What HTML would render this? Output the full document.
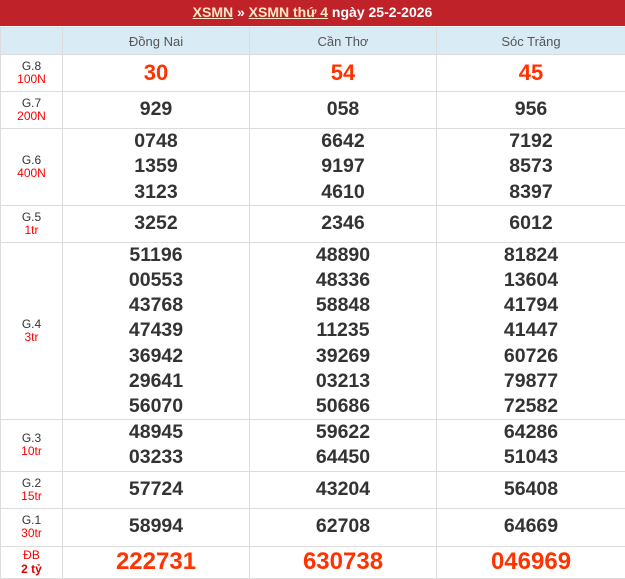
<!DOCTYPE html>
<html><head><meta charset="utf-8"><style>
*{margin:0;padding:0;box-sizing:border-box}
body{width:625px;height:579px;background:#fff;font-family:"Liberation Sans",Arial,sans-serif;position:relative;overflow:hidden}
.top{position:absolute;left:0;top:0;width:625px;height:26px;background:#bf2329;color:#fff;font-weight:bold;font-size:14px;text-align:center;line-height:25px}
.top a{color:#ffe9c6;text-decoration:underline}
table{position:absolute;left:0;top:27px;width:625px;border-collapse:collapse;table-layout:fixed}
td{border:1px solid #dcdcdc;text-align:center;vertical-align:middle;padding:0}
th{border:1px solid #dcdcdc;background:#d9ebf5;color:#555;font-weight:normal;font-size:13px;height:27px}
.l{font-size:12px;color:#333;line-height:13px}
.l span{color:#f00;display:block}
.n{font-size:19.5px;font-weight:bold;color:#333;line-height:25.3px}
.r{color:#ff3300;font-size:22px}
.d{color:#ff3300;font-size:24px}
.db{color:#f00;font-size:12px;line-height:14px}
.db b{color:#d00;display:block}
</style></head><body>
<div class="top"><a>XSMN</a> » <a>XSMN thứ 4</a> ngày 25-2-2026</div>
<table>
<colgroup><col style="width:62px"><col style="width:187px"><col style="width:187px"><col style="width:189px"></colgroup>
<tr><th></th><th>Đồng Nai</th><th>Cần Thơ</th><th>Sóc Trăng</th></tr>
<tr style="height:37px"><td class="l">G.8<span>100N</span></td><td class="n r">30</td><td class="n r">54</td><td class="n r">45</td></tr>
<tr style="height:37px"><td class="l">G.7<span>200N</span></td><td class="n">929</td><td class="n">058</td><td class="n">956</td></tr>
<tr style="height:77px"><td class="l">G.6<span>400N</span></td><td class="n">0748<br>1359<br>3123</td><td class="n">6642<br>9197<br>4610</td><td class="n">7192<br>8573<br>8397</td></tr>
<tr style="height:37px"><td class="l">G.5<span>1tr</span></td><td class="n">3252</td><td class="n">2346</td><td class="n">6012</td></tr>
<tr style="height:177px"><td class="l">G.4<span>3tr</span></td><td class="n" style="line-height:25.1px">51196<br>00553<br>43768<br>47439<br>36942<br>29641<br>56070</td><td class="n" style="line-height:25.1px">48890<br>48336<br>58848<br>11235<br>39269<br>03213<br>50686</td><td class="n" style="line-height:25.1px">81824<br>13604<br>41794<br>41447<br>60726<br>79877<br>72582</td></tr>
<tr style="height:51px"><td class="l">G.3<span>10tr</span></td><td class="n">48945<br>03233</td><td class="n">59622<br>64450</td><td class="n">64286<br>51043</td></tr>
<tr style="height:37px"><td class="l">G.2<span>15tr</span></td><td class="n">57724</td><td class="n">43204</td><td class="n">56408</td></tr>
<tr style="height:38px"><td class="l">G.1<span>30tr</span></td><td class="n">58994</td><td class="n">62708</td><td class="n">64669</td></tr>
<tr style="height:32px"><td class="db">ĐB<b>2 tỷ</b></td><td class="n d">222731</td><td class="n d">630738</td><td class="n d">046969</td></tr>
</table>
</body></html>
